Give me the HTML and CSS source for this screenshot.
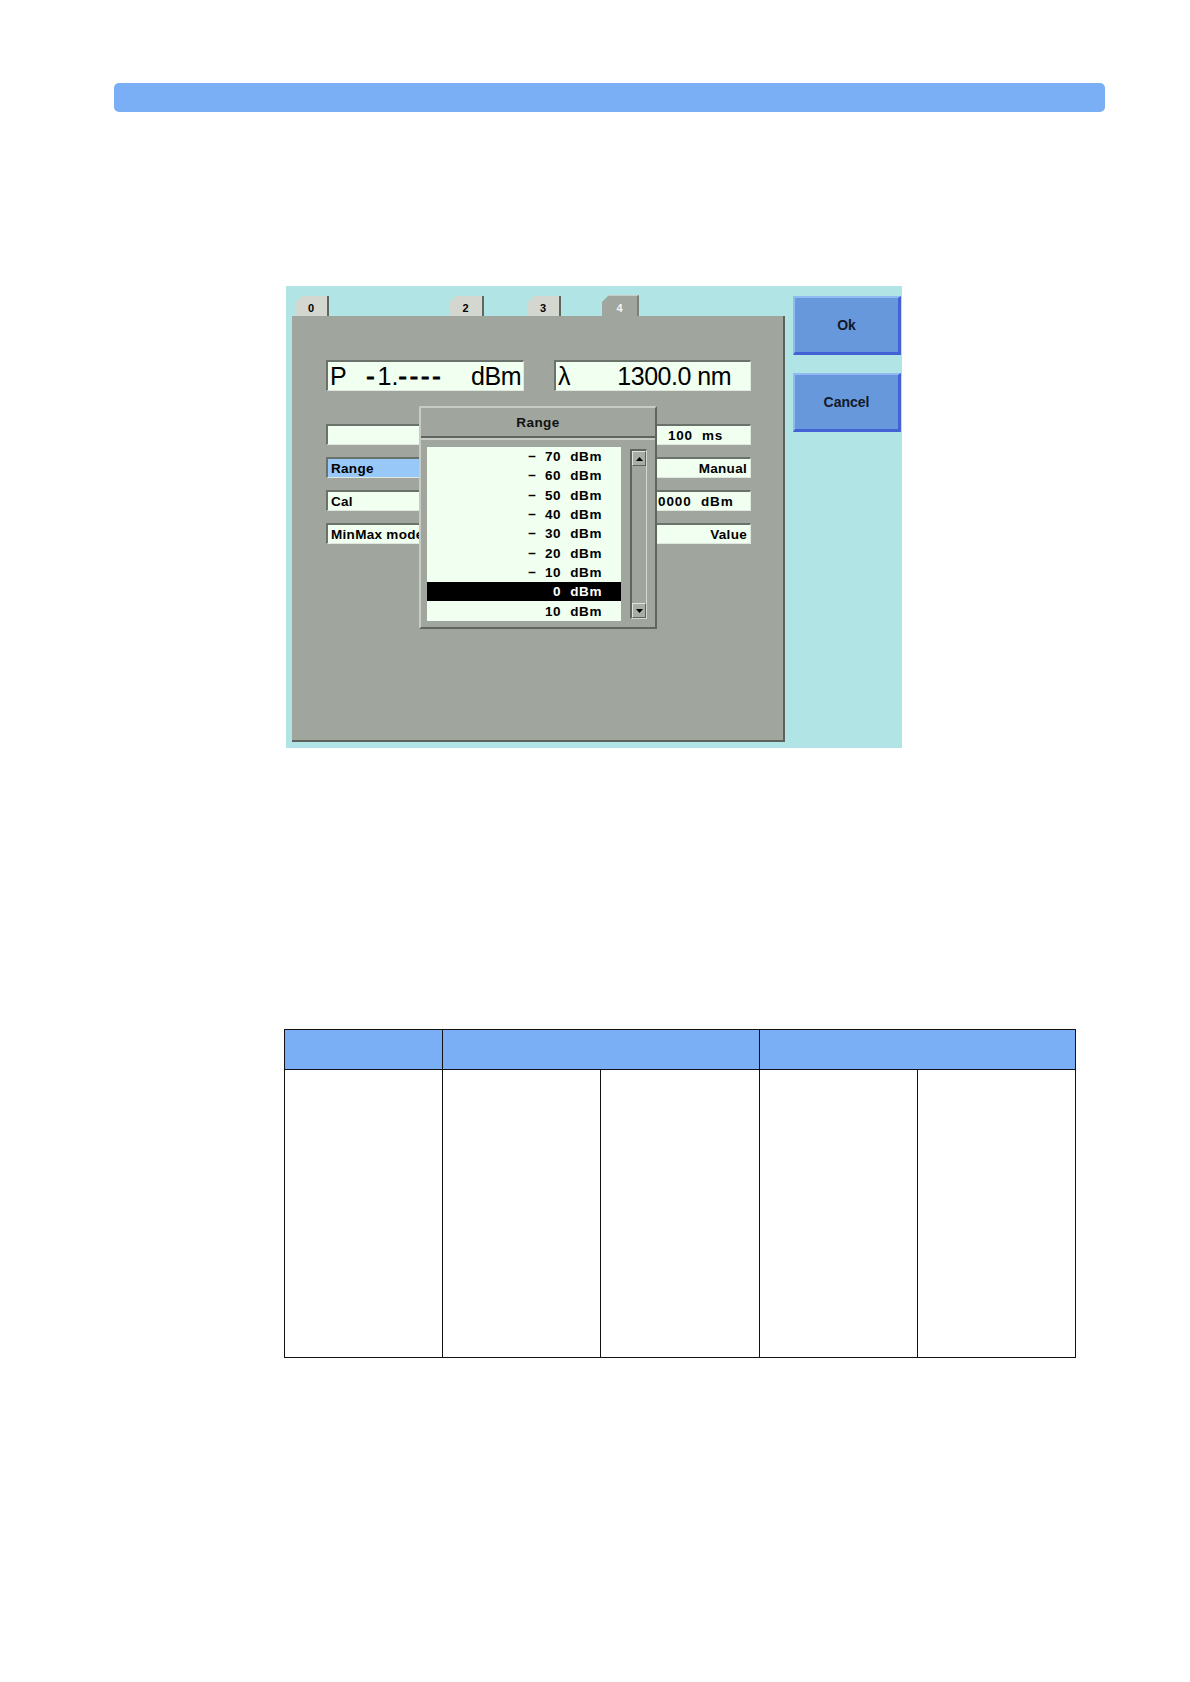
FILE: index.html
```html
<!DOCTYPE html>
<html>
<head>
<meta charset="utf-8">
<link rel="stylesheet" href="styles.css">
</head>
<body>
<div class="band"></div>

<div class="shot">
  <div class="left">
    <div class="tabs">
      <div class="tab t0">0</div>
      <div class="tab t2">2</div>
      <div class="tab t3">3</div>
      <div class="tab t4">4</div>
    </div>
    <div class="panel">
      <div class="bigrow">
        <div class="field big p"><span>P</span><span class="pv"><span class="d">-</span>1.<span class="d">----</span></span><span>dBm</span></div>
        <div class="field big l"><span>λ</span><span class="lv">1300.0 nm</span></div>
      </div>
      <div class="rows">
        <div class="row">
          <div class="field sm lf"></div>
          <div class="field sm rf"><span class="lpad">100&nbsp;&nbsp;ms</span></div>
        </div>
        <div class="row">
          <div class="field sm lf sel">Range</div>
          <div class="field sm rf right">Manual</div>
        </div>
        <div class="row">
          <div class="field sm lf">Cal</div>
          <div class="field sm rf"><span class="cut">0000&nbsp;&nbsp;dBm</span></div>
        </div>
        <div class="row">
          <div class="field sm lf">MinMax mode</div>
          <div class="field sm rf right">Value</div>
        </div>
      </div>

      <div class="popup">
        <div class="ptitle">Range</div>
        <div class="pbody">
          <div class="list">
            <div class="item"><span class="sg">−</span><span class="nm">70</span><span class="un">dBm</span></div>
            <div class="item"><span class="sg">−</span><span class="nm">60</span><span class="un">dBm</span></div>
            <div class="item"><span class="sg">−</span><span class="nm">50</span><span class="un">dBm</span></div>
            <div class="item"><span class="sg">−</span><span class="nm">40</span><span class="un">dBm</span></div>
            <div class="item"><span class="sg">−</span><span class="nm">30</span><span class="un">dBm</span></div>
            <div class="item"><span class="sg">−</span><span class="nm">20</span><span class="un">dBm</span></div>
            <div class="item"><span class="sg">−</span><span class="nm">10</span><span class="un">dBm</span></div>
            <div class="item on"><span class="sg"></span><span class="nm">0</span><span class="un">dBm</span></div>
            <div class="item"><span class="sg"></span><span class="nm">10</span><span class="un">dBm</span></div>
          </div>
          <div class="scroll">
            <div class="arrow"><svg width="9" height="6" viewBox="0 0 9 6"><path d="M4.5 1 L8 5 L1 5 Z" fill="#000"/></svg></div>
            <div class="track"></div>
            <div class="arrow"><svg width="9" height="6" viewBox="0 0 9 6"><path d="M1 1 L8 1 L4.5 5 Z" fill="#000"/></svg></div>
          </div>
        </div>
      </div>
    </div>
  </div>
  <div class="buttons">
    <div class="btn">Ok</div>
    <div class="btn">Cancel</div>
  </div>
</div>

<table class="tbl">
  <colgroup><col><col><col><col><col></colgroup>
  <tr class="head"><td></td><td colspan="2"></td><td colspan="2"></td></tr>
  <tr class="body"><td></td><td></td><td></td><td></td><td></td></tr>
</table>
</body>
</html>
```

FILE: styles.css
```css
html, body { margin: 0; padding: 0; background: #fff; }
body { width: 1190px; min-height: 1682px; font-family: "Liberation Sans", Arial, sans-serif; }

.band {
  margin: 83px 85px 0 114px;
  height: 29px;
  border-radius: 5px;
  background: #7aaef5;
}

.shot {
  margin: 174px 0 0 286px;
  width: 616px;
  height: 462px;
  box-sizing: border-box;
  background: #b1e4e4;
  display: flex;
  gap: 8px;
  padding: 0 1px 6px 6px;
}
.left { width: 493px; display: flex; flex-direction: column; }
.tabs { height: 30px; display: flex; align-items: flex-end; }
.tab {
  height: 20px;
  box-sizing: border-box;
  background: #d3d7cf;
  border-right: 2px solid #5f655f;
  clip-path: polygon(0 7px, 7px 0, 100% 0, 100% 100%, 0 100%);
  font: bold 11px "Liberation Sans", Arial, sans-serif;
  color: #000;
  display: flex; align-items: center; justify-content: center;
  padding-top: 3px;
}
.t0 { margin-left: 3px; width: 34px; }
.t2 { margin-left: 120px; width: 35px; }
.t3 { margin-left: 43px; width: 34px; }
.t4 { margin-left: 41px; width: 37px; height: 21px; background: #a0a69e; color: #f4f4f4; border-right: 2px solid #7a807a; border-top: 1px solid #c8ccc6; padding-top: 3px; }

.panel {
  flex: 1;
  position: relative;
  background: #a0a69e;
  border-right: 2px solid #5c625c;
  border-bottom: 2px solid #5c625c;
  padding: 44px 0 0 34px;
}

.field {
  box-sizing: border-box;
  background: #f1fff1;
  border-top: 2px solid #6b716b;
  border-left: 2px solid #6b716b;
  border-bottom: 1px solid #dfe7df;
  border-right: 1px solid #dfe7df;
  color: #000;
}
.bigrow { display: flex; gap: 30px; }
.big {
  height: 31px;
  display: flex; align-items: center;
  font: 25px "Liberation Sans", Arial, sans-serif;
  letter-spacing: -0.5px;
  padding: 0 2px 0 2px;
}
.p { width: 198px; justify-content: space-between; }
.p .pv { margin-left: 8px; margin-right: auto; padding-left: 12px; letter-spacing: 0; }
.p .pv .d { letter-spacing: 3px; -webkit-text-stroke: 1px #000; }
.l { width: 197px; }
.l .lv { margin-left: auto; margin-right: 17px; }

.rows { margin-top: 33px; display: flex; flex-direction: column; gap: 12px; width: 425px; }
.row { display: flex; justify-content: space-between; }
.sm {
  height: 21px;
  font: bold 13.5px "Liberation Sans", Arial, sans-serif;
  letter-spacing: 0.3px;
  display: flex; align-items: center;
  padding: 0 3px 0 3px;
  white-space: nowrap;
  overflow: hidden;
}
.lf { width: 210px; }
.rf { width: 97px; }
.rf.right { justify-content: flex-end; }
.sel { background: #98c8f8; }
.lpad { padding-left: 9px; letter-spacing: 0.8px; }
.cut { margin-left: -1px; letter-spacing: 0.9px; }

.popup {
  position: absolute;
  left: 127px; top: 90px;
  width: 238px; height: 223px;
  box-sizing: border-box;
  background: #a0a69e;
  border-top: 2px solid #c6cbc4;
  border-left: 2px solid #c6cbc4;
  border-right: 2px solid #60665f;
  border-bottom: 2px solid #60665f;
  display: flex; flex-direction: column;
}
.ptitle {
  height: 28px;
  border-bottom: 2px solid #60665f;
  box-shadow: 0 2px 0 #c6cbc4;
  font: bold 13.5px "Liberation Sans", Arial, sans-serif;
  color: #111;
  display: flex; align-items: center; justify-content: center;
  letter-spacing: 0.4px;
}
.pbody { display: flex; padding: 9px 8px 0 6px; gap: 9px; }
.list { width: 194px; height: 174px; background: #f1fff1; display: flex; flex-direction: column; }
.item {
  height: 19.3px;
  display: flex; align-items: center; justify-content: flex-end;
  padding-right: 19px;
  font: bold 13.5px "Liberation Sans", Arial, sans-serif;
  letter-spacing: 0.6px;
  color: #000;
}
.item .sg { width: 13px; text-align: left; }
.item .nm { width: 20px; text-align: right; }
.item .un { margin-left: 9px; }
.item.on { background: #000; color: #fff; }

.scroll {
  width: 17px; height: 170px; margin-top: 2px;
  box-sizing: border-box;
  background: #a0a69e;
  border-top: 2px solid #60665f; border-left: 2px solid #60665f;
  border-bottom: 1px solid #d4d8d2; border-right: 1px solid #d4d8d2;
  display: flex; flex-direction: column;
}
.arrow {
  height: 15px;
  box-sizing: border-box;
  background: #a8aea6;
  border-top: 1px solid #e0e4de; border-left: 1px solid #e0e4de;
  border-bottom: 1px solid #5c625c; border-right: 1px solid #5c625c;
  display: flex; align-items: center; justify-content: center;
}
.track { flex: 1; }

.buttons { width: 108px; display: flex; flex-direction: column; gap: 18px; padding-top: 10px; }
.btn {
  height: 59px;
  box-sizing: border-box;
  background: #6898dc;
  border-top: 2px solid #92baf2;
  border-left: 2px solid #92baf2;
  border-right: 3px solid #4262d6;
  border-bottom: 3px solid #4262d6;
  display: flex; align-items: center; justify-content: center;
  font: bold 14px "Liberation Sans", Arial, sans-serif;
  color: #111a2a;
}

.tbl {
  margin: 281px 0 0 284px;
  width: 792px;
  border-collapse: collapse;
  table-layout: fixed;
}
.tbl td { border: 1px solid #111; padding: 0; }
.tbl .head td { height: 39px; background: #7aaef5; }
.tbl .body td { height: 287px; background: #fff; }
```
